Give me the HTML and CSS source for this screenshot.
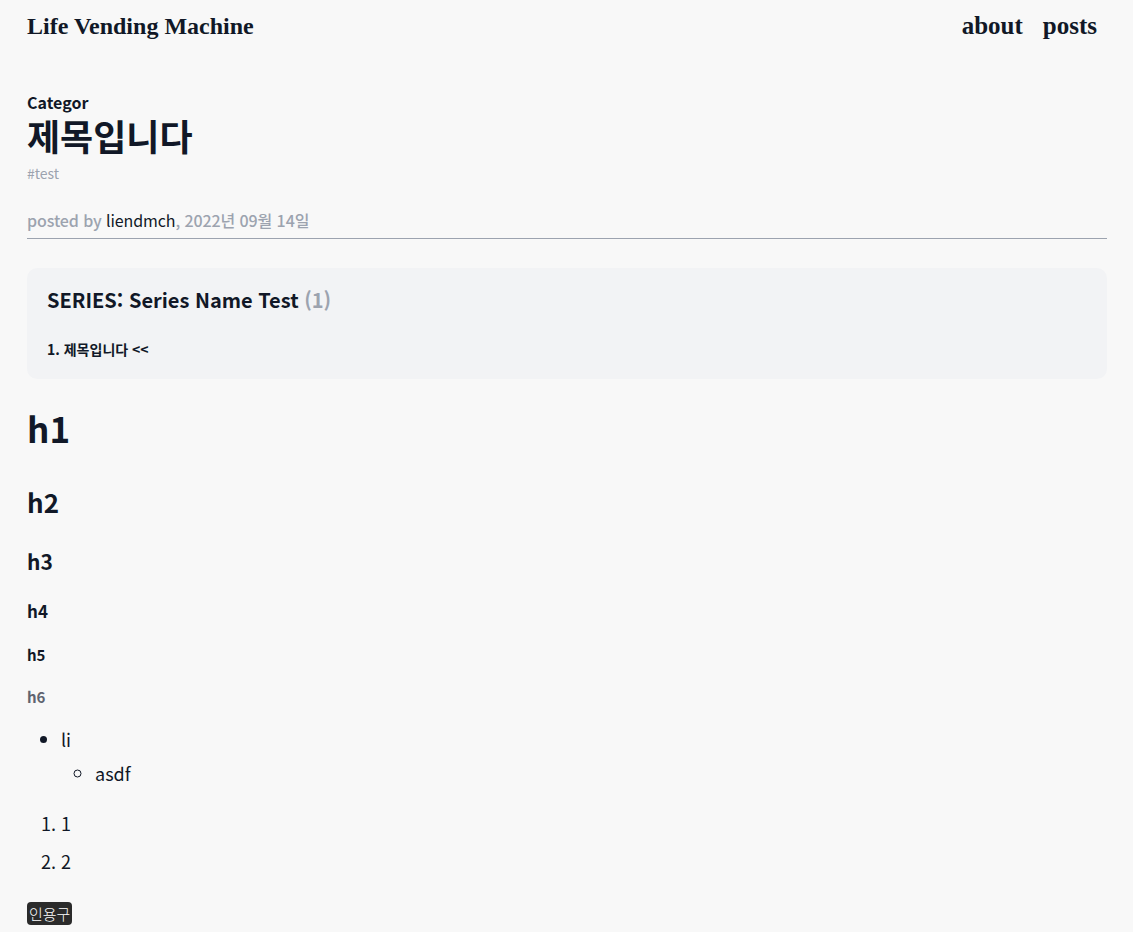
FILE: index.html
```html
<!DOCTYPE html>
<html lang="ko">
<head>
<meta charset="utf-8">
<title>Life Vending Machine</title>
<link rel="stylesheet" href="styles.css">
</head>
<body>
<header class="site-header">
  <a class="brand" href="#">Life Vending Machine</a>
  <nav class="nav">
    <a href="#">about</a>
    <a href="#">posts</a>
  </nav>
</header>
<main class="post">
  <div class="post-head">
    <div class="category">Categor</div>
    <h1 class="title">제목입니다</h1>
    <div class="tags">#test</div>
    <div class="meta">posted by <span class="author">liendmch</span>, 2022년 09월 14일</div>
  </div>
  <section class="series">
    <div class="series-title">SERIES: Series Name Test <span class="count">(1)</span></div>
    <div class="series-item">1. 제목입니다 &lt;&lt;</div>
  </section>
  <article class="content">
    <h1>h1</h1>
    <h2>h2</h2>
    <h3>h3</h3>
    <h4>h4</h4>
    <h5>h5</h5>
    <h6>h6</h6>
    <ul>
      <li>li
        <ul><li>asdf</li></ul>
      </li>
    </ul>
    <ol>
      <li>1</li>
      <li>2</li>
    </ol>
    <p><code>인용구</code></p>
  </article>
</main>
</body>
</html>
```
FILE: styles.css
```css
* { box-sizing: border-box; }
html, body { margin: 0; padding: 0; }
body {
  background: #f8f8f8;
  color: #111827;
  font-family: "Noto Sans CJK KR", "Noto Sans", sans-serif;
  font-size: 16px;
}
a { color: inherit; text-decoration: none; }

.site-header {
  display: flex;
  justify-content: space-between;
  align-items: center;
  padding: 0 36px 0 27px;
  height: 52px;
  font-family: "Liberation Serif", serif;
  font-weight: 700;
}
.brand { font-size: 24px; }
.nav { display: flex; gap: 20px; font-size: 25px; }

.post { padding: 40px 26px 0 27px; }
.post-head { border-bottom: 1px solid #9ca3af; padding-bottom: 6px; }
.category { font-weight: 700; font-size: 16px; line-height: 20px; }
.title { margin: 0; padding-top: 2px; font-size: 36px; line-height: 42px; font-weight: 700; }
.tags { color: #9ca3af; font-size: 14px; line-height: 20px; margin-top: 7px; }
.meta { color: #9ca3af; font-size: 16px; line-height: 24px; margin-top: 25px; font-weight: 500; letter-spacing: -0.1px; }
.author { color: #111827; font-weight: 400; }

.series {
  margin-top: 29px;
  background: #f2f3f5;
  border-radius: 10px;
  padding: 18px 20px 20px;
}
.series-title { font-size: 20px; font-weight: 600; line-height: 28px; }
.count { color: #9ca3af; }
.series-item { font-size: 14px; font-weight: 700; margin-top: 25px; line-height: 20px; }

.content h1 { font-size: 35px; margin: 27px 0 0; line-height: 44px; }
.content h2 { font-size: 26px; margin: 35px 0 0; line-height: 34px; }
.content h3 { font-size: 21px; margin: 27px 0 0; line-height: 30px; }
.content h4 { font-size: 17px; margin: 23px 0 0; line-height: 24px; }
.content h5 { font-size: 15px; margin: 21px 0 0; line-height: 22px; }
.content h6 { font-size: 15px; margin: 20px 0 0; line-height: 22px; color: #5f6470; }
.content ul, .content ol { font-size: 18px; line-height: 28px; margin: 17px 0 0; padding-left: 34px; }
.content ul ul { margin: 6px 0 0; padding-left: 34px; list-style: circle; }
.content ol { margin-top: 22px; }
.content ol li { margin-top: 10px; }
.content ol li:first-child { margin-top: 0; }
.content p { margin: 26px 0 0; }
code {
  background: #2b2b2b;
  color: #fff;
  font-family: "Noto Sans CJK KR", monospace;
  font-weight: 300;
  font-size: 15px;
  padding: 1px 2px;
  border-radius: 4px;
}
```
